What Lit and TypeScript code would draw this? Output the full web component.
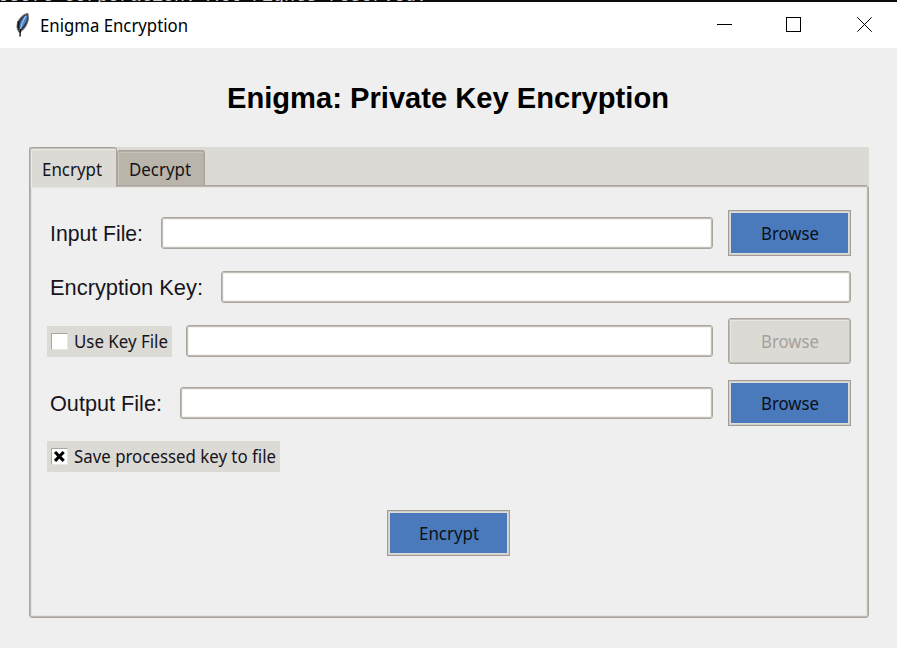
import { LitElement, html, css, svg } from "lit";
import { customElement, property } from "lit/decorators.js";

/** Single line of text set to a fixed advance width. */
@customElement("fit-text")
class FitText extends LitElement {
  @property({ type: Number }) width = 60;
  @property() text = "";
  static styles = css`
    :host { display: block; flex: none; height: 30px; }
    svg { display: block; overflow: visible; }
    text { fill: currentColor; white-space: pre; }
  `;
  render() {
    return html`<svg width=${this.width} height="30">${svg`<text x="0" y="22" textLength=${this.width} lengthAdjust="spacingAndGlyphs">${this.text}</text>`}</svg>`;
  }
}

@customElement("tk-button")
class TkButton extends LitElement {
  @property() label = "";
  @property({ type: Boolean, reflect: true }) disabled = false;
  static styles = css`
    :host { display: block; flex: none; width: 123px; height: 46px; font: 18.5px "Noto Sans", sans-serif; }
    .face { box-sizing: border-box; width: 100%; height: 100%; border: 1px solid #a09d99; background: #4a7abc;
      box-shadow: inset 0 0 0 1px #d3cfc8, inset 0 0 0 2px #dedcd8; color: #0b1019; display: flex; justify-content: center; padding-top: 7px; }
    :host([disabled]) .face { background: #dcdad5; color: #a5a19b; border: 1px solid #aaa69d; border-radius: 3px;
      box-shadow: inset 0 0 0 1px #c3bfb8, inset 2px 2px 0 #e9e6e1; }
  `;
  render() {
    return html`<div class="face"><fit-text .width=${this.label === "Encrypt" ? 60 : 58} .text=${this.label}></fit-text></div>`;
  }
}

@customElement("tk-check")
class TkCheck extends LitElement {
  @property() label = "";
  @property({ type: Number }) textWidth = 90;
  @property({ type: Boolean }) checked = false;
  static styles = css`
    :host { display: flex; flex: none; box-sizing: border-box; height: 31px; background: #dcdad5; padding: 0 4px;
      font: 18.5px "Noto Sans", sans-serif; color: #15131a; }
    .box { box-sizing: border-box; width: 17px; height: 17px; margin: 7px 6px 0 0; background: #fff;
      border: 1px solid; border-color: #aaa69d #e9e6df #e9e6df #aaa69d; }
    svg { display: block; }
  `;
  render() {
    return html`<div class="box">${this.checked
      ? html`<svg width="15" height="15" viewBox="0 0 15 15"><path d="M3 3L11.7 11.8M11.7 3L3 11.8" stroke="#000" stroke-width="3.1" fill="none"/></svg>`
      : ""}</div><fit-text .width=${this.textWidth} .text=${this.label}></fit-text>`;
  }
}

@customElement("app-root")
class AppRoot extends LitElement {
  static styles = css`
    :host { display: flex; flex-direction: column; width: 897px; height: 648px; background: #efefef; overflow: hidden; color: #000; }
    .console { height: 2px; flex: none; background: #0c0c0c; overflow: hidden; color: #ccc; font: 18.33px/20px "Liberation Mono", monospace; white-space: pre; }
    .console span { display: block; margin: -13px 0 0 -46px; }
    .title { height: 46px; flex: none; background: #fff; display: flex; font: 18.5px "Noto Sans", sans-serif; }
    .feather { margin: 10px 10px 0 15px; width: 15px; height: 25px; flex: none; }
    .title fit-text { margin-top: 8px; }
    .controls { margin-left: auto; width: 181px; flex: none; height: 46px; display: block; }
    h1 { margin: 38px 0 0 227px; height: 61px; flex: none; font: bold 29.33px "Liberation Sans", sans-serif; }
    .book { width: 840px; height: 471px; margin-left: 29px; display: flex; flex-direction: column; }
    .tabs { height: 38px; flex: none; background: #dcdad5; display: flex; font: 18.5px "Noto Sans", sans-serif; color: #15131a; }
    .tab { box-sizing: border-box; border: 1px solid #aaa69d; border-bottom: 0; border-radius: 3px 3px 0 0; }
    .active { width: 88px; height: 40px; background: #dcdad5; padding: 6px 0 0 12px; z-index: 1; box-shadow: inset 1px 1px 0 #c3bfb8, inset 2px 2px 0 #edebe6; }
    .idle { width: 88px; height: 35px; margin-top: 3px; background: #bab5ab; padding: 3px 0 0 11px; box-shadow: inset 0 1px 0 #b0aca3, inset 1px 2px 0 #c8c3ba, inset -1px 0 0 #b0aca3; }
    .pane { box-sizing: border-box; height: 433px; border: 1px solid #aaa69d; border-radius: 0 3px 3px 3px; box-shadow: inset 0 0 0 1px #bdb9b2, inset 0 0 0 2px #e6e4e0;
      padding: 24px 17px 0 17px; display: flex; flex-direction: column; }
    .row { display: flex; align-items: center; height: 46px; flex: none; font: 22.7px "Liberation Sans", sans-serif; color: #17151b; }
    .row > fit-text { margin: 2px 0 0 3px; }
    .key { height: 32px; margin-top: 15px; }
    .file { margin-top: 15px; }
    .out { margin-top: 16px; }
    .entry { box-sizing: border-box; height: 32px; flex: 1; min-width: 0; border: 1px solid #aaa69d; border-radius: 3px; background: #fff;
      box-shadow: inset 0 0 0 1px #c3bfb8, inset 0 0 0 2px #f5f3f0; }
    tk-button { margin-left: 15px; }
    .save { margin-top: 15px; align-self: flex-start; }
    .go { align-self: center; margin: 38px 1px 0 0; }
  `;
  render() {
    return html`
      <div class="console"><span>Microsoft Corporation. All rights reserved.</span></div>
      <div class="title">
        <svg class="feather" viewBox="0 0 15 25">
          <path d="M13 1.5C9 1.5 4 6 2.4 11.5C1.5 15 2.1 18 4.3 20.7C8.6 18 12.5 13.5 13.4 7Z" fill="#303b48" stroke="#77736e" stroke-width="1"/>
          <path d="M11.6 3C8 5 5.2 9 4.6 14L5 17C9 14 11.8 10 12.1 5Z" fill="#477fc4"/>
          <path d="M11 4C8 8 6.4 13 5 19" stroke="#8dbcf0" stroke-width="1.3" fill="none"/>
          <path d="M3.3 9V16M5.4 17L5 24.5" stroke="#111" stroke-width="1.4" fill="none"/>
        </svg>
        <fit-text .width=${148} .text=${"Enigma Encryption"}></fit-text>
        <svg class="controls" viewBox="0 0 181 46" fill="none" stroke="#000" stroke-width="1">
          <path d="M1 22.5H16"/><rect x="70.5" y="15.5" width="14" height="14"/>
          <path d="M141.3 15.3L155.7 29.7M155.7 15.3L141.3 29.7"/>
        </svg>
      </div>
      <h1><fit-text .width=${442} .text=${"Enigma: Private Key Encryption"}></fit-text></h1>
      <div class="book">
        <div class="tabs">
          <div class="tab active"><fit-text .width=${60} .text=${"Encrypt"}></fit-text></div>
          <div class="tab idle"><fit-text .width=${62} .text=${"Decrypt"}></fit-text></div>
        </div>
        <div class="pane">
          <div class="row"><fit-text .width=${93} .text=${"Input File:"}></fit-text><div class="entry" style="margin-left:18px"></div><tk-button label="Browse"></tk-button></div>
          <div class="row key"><fit-text .width=${153} .text=${"Encryption Key:"}></fit-text><div class="entry" style="margin-left:18px"></div></div>
          <div class="row file"><tk-check label="Use Key File" .textWidth=${94}></tk-check><div class="entry" style="margin-left:14px"></div><tk-button label="Browse" disabled></tk-button></div>
          <div class="row out"><fit-text .width=${112} .text=${"Output File:"}></fit-text><div class="entry" style="margin-left:18px"></div><tk-button label="Browse"></tk-button></div>
          <tk-check class="save" label="Save processed key to file" .textWidth=${202} checked></tk-check>
          <tk-button class="go" label="Encrypt"></tk-button>
        </div>
      </div>`;
  }
}
